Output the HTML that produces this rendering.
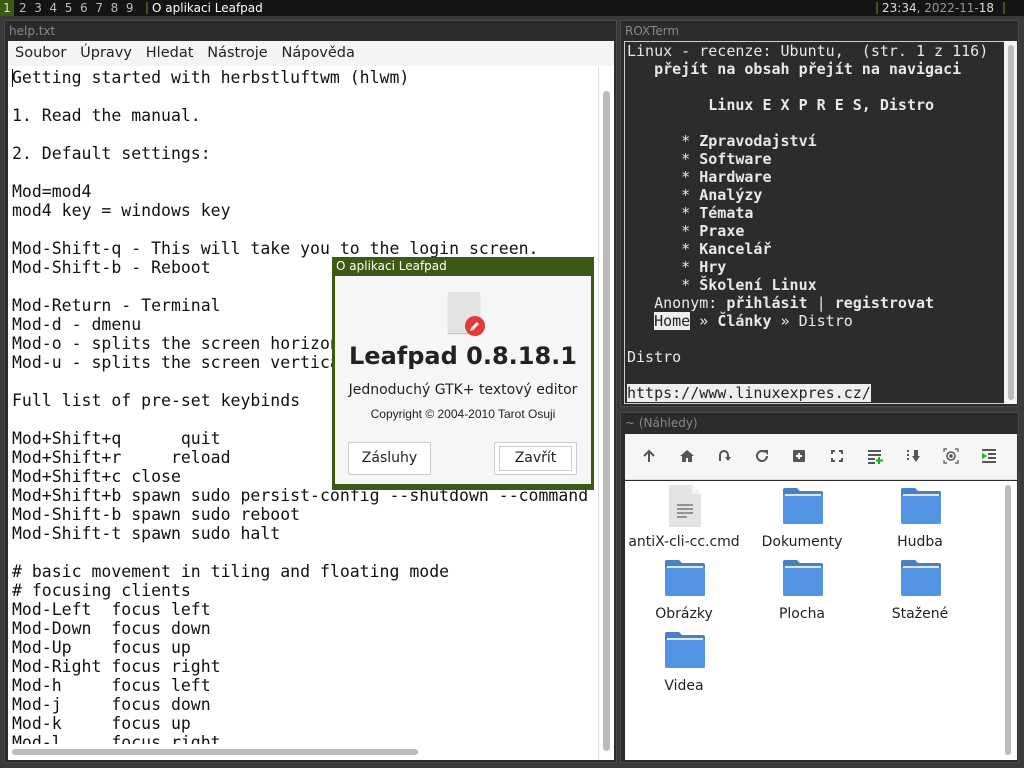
<!DOCTYPE html>
<html><head><meta charset="utf-8"><style>
*{margin:0;padding:0;box-sizing:border-box}
body{width:1024px;height:768px;background:#3a3a3a;position:relative;overflow:hidden;font-family:"DejaVu Sans","Liberation Sans",sans-serif}
.abs{position:absolute}
.bar{left:0;top:0;width:1024px;height:16px;background:#141414;color:#bbb;font-size:12px;line-height:16px}
.win{background:#2c2c2c;border:1px solid #4a4a4a}
.title{color:#888;font-size:12px;position:absolute;left:4px;top:3px}
pre{font-family:"DejaVu Sans Mono","Liberation Mono",monospace}
.tb svg{position:absolute;top:14px}
.fi{position:absolute;width:118px;text-align:center;font-size:14px;color:#222}
</style></head><body>
<div class="abs bar">
<span class="abs" style="left:0;width:14px;background:#3c5a14;color:#ddd;text-align:center">1</span>
<span class="abs" style="left:19px;letter-spacing:0">2&nbsp; 3&nbsp; 4&nbsp; 5&nbsp; 6&nbsp; 7&nbsp; 8&nbsp; 9</span>
<span class="abs" style="left:146px;top:2px;width:2px;height:12px;background:#3c5a14"></span>
<span class="abs" style="left:152px;color:#fff">O aplikaci Leafpad</span>
<span class="abs" style="left:876px;top:2px;width:2px;height:12px;background:#3c5a14"></span>
<span class="abs" style="left:882px;color:#ddd">23:34<span style="color:#999">, 2022-11-</span>18</span>
<span class="abs" style="left:1003px;top:2px;width:2px;height:12px;background:#3c5a14"></span>
</div>

<div class="abs win" style="left:4px;top:20px;width:613px;height:743px">
<div class="title">help.txt</div>
<div class="abs" style="left:3px;top:20px;width:606px;height:719px;background:#fff;overflow:hidden">
 <div class="abs" style="left:0;top:0;width:606px;height:25px;background:#f4f4f4;font-size:14.5px;color:#222;line-height:25px;padding-left:7px">Soubor&nbsp;&nbsp; Úpravy&nbsp;&nbsp; Hledat&nbsp;&nbsp; Nástroje&nbsp;&nbsp; Nápověda</div>
 <pre class="abs" style="left:4px;top:27px;font-size:16.5px;line-height:19px;color:#111">Getting started with herbstluftwm (hlwm)

1. Read the manual.

2. Default settings:

Mod=mod4
mod4 key = windows key

Mod-Shift-q - This will take you to the login screen.
Mod-Shift-b - Reboot

Mod-Return - Terminal
Mod-d - dmenu
Mod-o - splits the screen horizontally
Mod-u - splits the screen vertically

Full list of pre-set keybinds

Mod+Shift+q      quit
Mod+Shift+r     reload
Mod+Shift+c close
Mod+Shift+b spawn sudo persist-config --shutdown --command
Mod-Shift-b spawn sudo reboot
Mod-Shift-t spawn sudo halt

# basic movement in tiling and floating mode
# focusing clients
Mod-Left  focus left
Mod-Down  focus down
Mod-Up    focus up
Mod-Right focus right
Mod-h     focus left
Mod-j     focus down
Mod-k     focus up
Mod-l     focus right</pre>
 <div class="abs" style="left:4px;top:28px;width:1px;height:18px;background:#000"></div>
 <div class="abs" style="left:590px;top:26px;width:16px;height:693px;background:#fff;border-left:1px solid #ddd"></div>
 <div class="abs" style="left:595px;top:50px;width:7px;height:660px;background:#bbb;border-radius:4px"></div>
 <div class="abs" style="left:0;top:703px;width:590px;height:16px;background:#fff"></div>
 <div class="abs" style="left:4px;top:708px;width:406px;height:6px;background:#bbb;border-radius:3px"></div>
</div>
</div>

<div class="abs win" style="left:620px;top:20px;width:399px;height:387px">
<div class="title">ROXTerm</div>
<div class="abs" style="left:3px;top:20px;width:393px;height:363px;background:#2c2c2c;border:1px solid #ccc;border-right:none"></div>
<pre class="abs" style="left:6px;top:21px;font-size:15px;line-height:18px;color:#e8e8e8">Linux - recenze: Ubuntu,  (str. 1 z 116)
<b>   přejít na obsah přejít na navigaci</b>

<b>         Linux E X P R E S, Distro</b>

      * <b>Zpravodajství</b>
      * <b>Software</b>
      * <b>Hardware</b>
      * <b>Analýzy</b>
      * <b>Témata</b>
      * <b>Praxe</b>
      * <b>Kancelář</b>
      * <b>Hry</b>
      * <b>Školení Linux</b>
   Anonym: <b>přihlásit</b> | <b>registrovat</b>
   <span style="background:#eee;color:#222">Home</span> » <b>Články</b> » Distro

Distro

<span style="background:#eee;color:#222">https://www.linuxexpres.cz/</span></pre>
<div class="abs" style="left:383px;top:20px;width:13px;height:363px;background:#f4f4f4"></div>
<div class="abs" style="left:387px;top:24px;width:6px;height:355px;background:#bbb;border-radius:3px"></div>
</div>

<div class="abs win" style="left:620px;top:412px;width:399px;height:351px">
<div class="title">~ (Náhledy)</div>
<div class="abs tb" style="left:4px;top:21px;width:392px;height:46px;background:#f5f5f5;border-bottom:1px solid #ddd">
 <svg style="left:16px" width="16" height="16" viewBox="0 0 16 16"><path d="M8 14V3M3 8l5-5 5 5" stroke="#555" stroke-width="2" fill="none"/></svg>
 <svg style="left:54px" width="16" height="16" viewBox="0 0 16 16"><path d="M8 2L1 8h2v6h4v-4h2v4h4V8h2z" fill="#555"/></svg>
 <svg style="left:91px" width="16" height="16" viewBox="0 0 16 16"><path d="M4 13V7a4 4 0 0 1 8 0v3" stroke="#555" stroke-width="2" fill="none"/><path d="M9 9h6l-3 4z" fill="#555"/></svg>
 <svg style="left:129px" width="16" height="16" viewBox="0 0 16 16"><path d="M13 8a5 5 0 1 1-2-4" stroke="#555" stroke-width="2" fill="none"/><path d="M9 2h5v5z" fill="#555"/></svg>
 <svg style="left:166px" width="16" height="16" viewBox="0 0 16 16"><rect x="2" y="2" width="12" height="12" rx="1" fill="#555"/><path d="M8 5v6M5 8h6" stroke="#fff" stroke-width="2"/></svg>
 <svg style="left:204px" width="16" height="16" viewBox="0 0 16 16"><path d="M3 6V3h3M10 3h3v3M13 10v3h-3M6 13H3v-3" stroke="#555" stroke-width="2" fill="none"/></svg>
 <svg style="left:242px" width="16" height="16" viewBox="0 0 16 16"><path d="M1 3h13M1 7h13M1 11h7M1 15h7" stroke="#555" stroke-width="2"/><path d="M12 9v7M9 12.5h7" stroke="#2a2" stroke-width="2"/></svg>
 <svg style="left:280px" width="16" height="16" viewBox="0 0 16 16"><path d="M2 2h2v2H2zM2 6h2v2H2zM2 10h2v2H2z" fill="#555"/><path d="M7 8h8l-4 6zM9 2h4v7H9z" fill="#555"/></svg>
 <svg style="left:318px" width="16" height="16" viewBox="0 0 16 16"><circle cx="8" cy="8" r="4" stroke="#555" stroke-width="1.5" fill="none"/><circle cx="8" cy="8" r="1.8" fill="#555"/><path d="M1 4V1h3M12 1h3v3M15 12v3h-3M4 15H1v-3" stroke="#555" stroke-width="1.2" fill="none"/></svg>
 <svg style="left:356px" width="16" height="16" viewBox="0 0 16 16"><path d="M1 2h14M7 6h8M7 10h8M1 14h14" stroke="#555" stroke-width="2"/><path d="M1 5l5 3-5 3z" fill="#2a2"/></svg>
</div>
<div class="abs" style="left:4px;top:68px;width:392px;height:279px;background:#fff"></div>
<div class="abs" style="left:384px;top:72px;width:6px;height:270px;background:#bbb;border-radius:3px"></div>
<svg class="abs" style="left:48px;top:72px" width="32" height="42" viewBox="0 0 32 42"><path d="M0 1a1 1 0 0 1 1-1h22l9 9v32a1 1 0 0 1-1 1H1a1 1 0 0 1-1-1z" fill="#e3e3e3"/><path d="M23 0v9h9" fill="#f4f4f4"/><path d="M8 20h16M8 24h16M8 28h16M8 32h10" stroke="#777" stroke-width="1.5"/></svg>
<div class="fi" style="left:4px;top:121px">antiX-cli-cc.cmd</div>
<svg class="abs" style="left:162px;top:75px" width="40" height="36" viewBox="0 0 40 36"><path d="M0 2a2 2 0 0 1 2-2h12l3 3h21a2 2 0 0 1 2 2v29a2 2 0 0 1-2 2H2a2 2 0 0 1-2-2z" fill="#4a7fc0"/><rect x="0" y="7" width="40" height="29" rx="2" fill="#5294e2"/><rect x="2" y="6" width="36" height="2" fill="#dbe7f7"/></svg>
<div class="fi" style="left:122px;top:121px">Dokumenty</div>
<svg class="abs" style="left:280px;top:75px" width="40" height="36" viewBox="0 0 40 36"><path d="M0 2a2 2 0 0 1 2-2h12l3 3h21a2 2 0 0 1 2 2v29a2 2 0 0 1-2 2H2a2 2 0 0 1-2-2z" fill="#4a7fc0"/><rect x="0" y="7" width="40" height="29" rx="2" fill="#5294e2"/><rect x="2" y="6" width="36" height="2" fill="#dbe7f7"/></svg>
<div class="fi" style="left:240px;top:121px">Hudba</div>
<svg class="abs" style="left:44px;top:147px" width="40" height="36" viewBox="0 0 40 36"><path d="M0 2a2 2 0 0 1 2-2h12l3 3h21a2 2 0 0 1 2 2v29a2 2 0 0 1-2 2H2a2 2 0 0 1-2-2z" fill="#4a7fc0"/><rect x="0" y="7" width="40" height="29" rx="2" fill="#5294e2"/><rect x="2" y="6" width="36" height="2" fill="#dbe7f7"/></svg>
<div class="fi" style="left:4px;top:193px">Obrázky</div>
<svg class="abs" style="left:162px;top:147px" width="40" height="36" viewBox="0 0 40 36"><path d="M0 2a2 2 0 0 1 2-2h12l3 3h21a2 2 0 0 1 2 2v29a2 2 0 0 1-2 2H2a2 2 0 0 1-2-2z" fill="#4a7fc0"/><rect x="0" y="7" width="40" height="29" rx="2" fill="#5294e2"/><rect x="2" y="6" width="36" height="2" fill="#dbe7f7"/></svg>
<div class="fi" style="left:122px;top:193px">Plocha</div>
<svg class="abs" style="left:280px;top:147px" width="40" height="36" viewBox="0 0 40 36"><path d="M0 2a2 2 0 0 1 2-2h12l3 3h21a2 2 0 0 1 2 2v29a2 2 0 0 1-2 2H2a2 2 0 0 1-2-2z" fill="#4a7fc0"/><rect x="0" y="7" width="40" height="29" rx="2" fill="#5294e2"/><rect x="2" y="6" width="36" height="2" fill="#dbe7f7"/></svg>
<div class="fi" style="left:240px;top:193px">Stažené</div>
<svg class="abs" style="left:44px;top:219px" width="40" height="36" viewBox="0 0 40 36"><path d="M0 2a2 2 0 0 1 2-2h12l3 3h21a2 2 0 0 1 2 2v29a2 2 0 0 1-2 2H2a2 2 0 0 1-2-2z" fill="#4a7fc0"/><rect x="0" y="7" width="40" height="29" rx="2" fill="#5294e2"/><rect x="2" y="6" width="36" height="2" fill="#dbe7f7"/></svg>
<div class="fi" style="left:4px;top:265px">Videa</div>
</div>

<div class="abs" style="left:332px;top:257px;width:262px;height:233px;background:#3c5a14;padding:0 3px 3px 3px">
 <div style="height:19px;color:#fff;font-size:12px;line-height:19px;padding-left:1px">O aplikaci Leafpad</div>
 <div style="position:relative;background:#f5f6f7;height:208px">
  <div class="abs" style="left:113px;top:16px;width:32px;height:41px;background:#e3e3e3;border-radius:1px;box-shadow:0 1px 1px #bbb"></div>
  <svg class="abs" style="left:129px;top:39px" width="22" height="22" viewBox="0 0 22 22"><circle cx="11" cy="11" r="10" fill="#e53935"/><path d="M6 16l1-3 6-6 2 2-6 6z" fill="#fff"/></svg>
  <div class="abs" style="left:0;width:256px;top:66px;text-align:center;font-size:24px;font-weight:bold;color:#222">Leafpad 0.8.18.1</div>
  <div class="abs" style="left:0;width:256px;top:106px;text-align:center;font-size:14px;color:#222">Jednoduchý GTK+ textový editor</div>
  <div class="abs" style="left:0;width:256px;top:131px;text-align:center;font-size:12px;color:#222;font-family:'Liberation Sans',sans-serif">Copyright © 2004-2010 Tarot Osuji</div>
  <div class="abs" style="left:13px;top:166px;width:83px;height:33px;background:#fff;border:1px solid #ccc;border-radius:2px;text-align:center;line-height:31px;font-size:14px;color:#222">Zásluhy</div>
  <div class="abs" style="left:159px;top:166px;width:83px;height:33px;background:#fff;border:1px solid #ccc;border-radius:2px"><div style="margin:3px 4px;border:1px solid #ccc;height:25px;text-align:center;line-height:23px;font-size:14px;color:#222">Zavřít</div></div>
 </div>
</div>
</body></html>
